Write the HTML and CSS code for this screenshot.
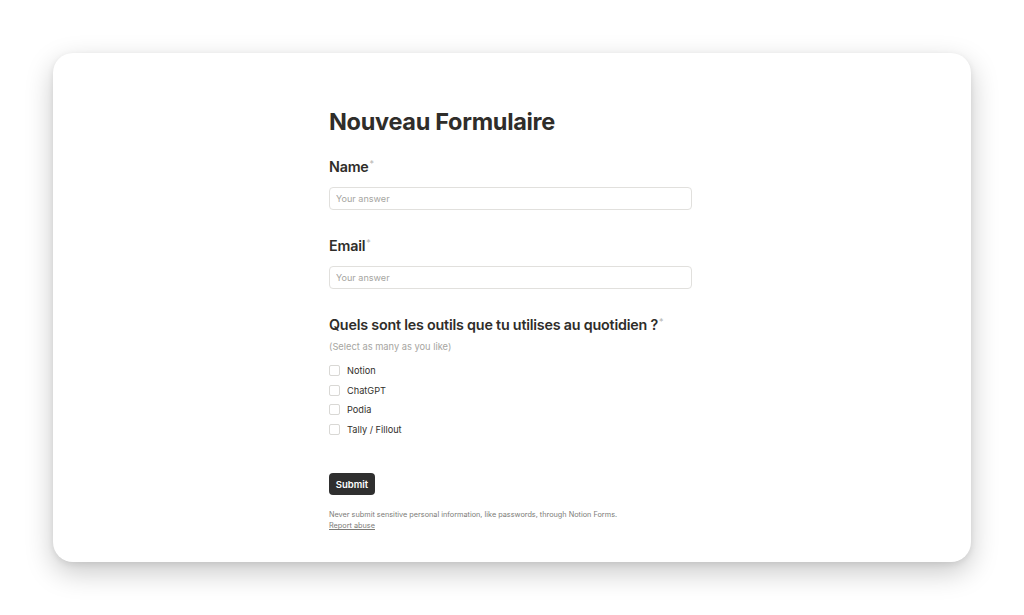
FILE: index.html
```html
<!DOCTYPE html>
<html lang="fr">
<head>
<meta charset="utf-8">
<title>Nouveau Formulaire</title>
<link rel="stylesheet" href="styles.css">
</head>
<body>
<div class="card">
  <form class="form">
    <h1 class="title">Nouveau Formulaire</h1>

    <div class="field">
      <label class="label">Name<span class="req">*</span></label>
      <input class="input" type="text" placeholder="Your answer">
    </div>

    <div class="field">
      <label class="label">Email<span class="req">*</span></label>
      <input class="input" type="text" placeholder="Your answer">
    </div>

    <div class="field field-last">
      <label class="label">Quels sont les outils que tu utilises au quotidien ?<span class="req">*</span></label>
      <div class="hint">(Select as many as you like)</div>
      <div class="options">
        <div class="option"><span class="box"></span><span>Notion</span></div>
        <div class="option"><span class="box"></span><span>ChatGPT</span></div>
        <div class="option"><span class="box"></span><span>Podia</span></div>
        <div class="option"><span class="box"></span><span>Tally / Fillout</span></div>
      </div>
    </div>

    <button class="submit" type="button">Submit</button>

    <div class="footer">
      <div>Never submit sensitive personal information, like passwords, through Notion Forms.</div>
      <a class="abuse" href="#">Report abuse</a>
    </div>
  </form>
</div>
</body>
</html>
```

FILE: styles.css
```css
* { box-sizing: border-box; }
html, body { margin: 0; padding: 0; background: #ffffff; }
body {
  font-family: Inter, "Noto Sans", "Liberation Sans", sans-serif;
  color: #32302c;
  padding: 53px 53px 0 53px;
  width: 1024px;
  height: 615px;
  overflow: hidden;
}
.card {
  width: 918px;
  height: 509px;
  background: #ffffff;
  border-radius: 20px;
  box-shadow: 0 10px 28px rgba(0, 0, 0, 0.22), 0 2px 6px rgba(0, 0, 0, 0.08);
  padding: 53px 0 0 276px;
}
.form {
  width: 363px;
  display: flex;
  flex-direction: column;
}
.title {
  margin: 0 0 19px 0;
  font-size: 23.5px;
  line-height: 32px;
  font-weight: 700;
  letter-spacing: -0.3px;
  color: #2f2d2a;
}
.field {
  display: flex;
  flex-direction: column;
  margin-bottom: 26px;
}
.field-last { margin-bottom: 34px; }
.label {
  font-size: 14.3px;
  line-height: 20px;
  height: 20px;
  font-weight: 600;
  letter-spacing: -0.2px;
  color: #2f2d2a;
  margin-bottom: 10px;
  white-space: nowrap;
}
.req {
  color: #b4b4b0;
  font-size: 9px;
  font-weight: 400;
  line-height: 14px;
  vertical-align: top;
  margin-left: 1px;
}
.input {
  width: 363px;
  height: 23px;
  border: 1px solid #e1e0dd;
  border-radius: 4px;
  padding: 0 6px;
  font-family: inherit;
  font-size: 9.1px;
  color: #32302c;
  background: #fff;
  outline: none;
}
.input::placeholder { color: #a6a5a1; }
.hint {
  margin-top: -5px;
  font-size: 9.3px;
  line-height: 14px;
  color: #a6a5a1;
  margin-bottom: 7px;
}
.options {
  display: flex;
  flex-direction: column;
}
.option {
  height: 19.5px;
  display: flex;
  align-items: center;
  gap: 7px;
  font-size: 9.2px;
  color: #32302c;
}
.box {
  width: 11px;
  height: 11px;
  border: 1px solid #d9d8d5;
  border-radius: 2px;
  background: #fff;
}
.submit {
  align-self: flex-start;
  width: 46px;
  height: 22px;
  border: none;
  border-radius: 4px;
  background: #2f2f2f;
  color: #ffffff;
  font-family: inherit;
  font-size: 9.5px;
  font-weight: 600;
  padding: 0;
  margin-bottom: 14px;
}
.footer {
  font-size: 7.3px;
  line-height: 11px;
  color: #7d7c78;
}
.abuse {
  color: #7d7c78;
  text-decoration: underline;
}
```
